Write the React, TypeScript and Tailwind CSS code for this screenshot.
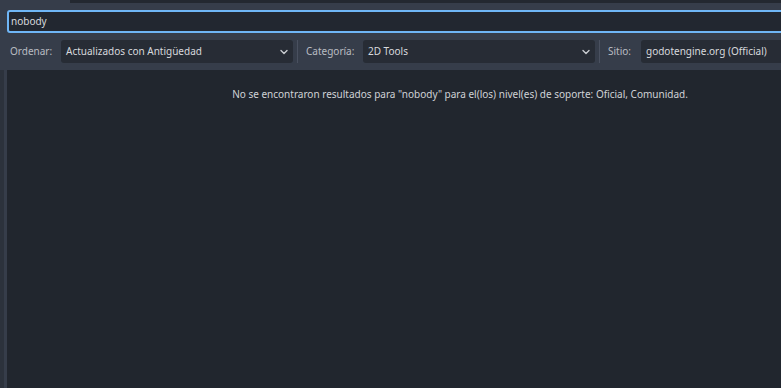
import React from "react";

const Chevron = () => (
  <svg width="10" height="10" viewBox="0 0 10 10" className="shrink-0">
    <path d="M2 3.5 L5 6.5 L8 3.5" fill="none" stroke="#c9ccd1" strokeWidth="1.4" strokeLinecap="round" strokeLinejoin="round" />
  </svg>
);

const Select = ({ text }: { text: string }) => (
  <div className="flex h-[23px] w-[232px] shrink-0 items-center justify-between rounded-[3px] bg-[#272c35] pl-[5px] pr-[4px] text-[#d7d9dd]">
    <span>{text}</span>
    <Chevron />
  </div>
);

const Sep = () => <div className="ml-[4px] mr-[8px] h-[23px] w-px shrink-0 bg-[#4a5160]" />;

export default function App() {
  return (
    <div
      className="h-[388px] w-[781px] overflow-hidden bg-[#363d4a] text-[10px]"
      style={{ fontFamily: '"Noto Sans", "Open Sans", sans-serif' }}
    >
      <div className="w-[913px]">
        <div className="flex h-[3px]">
          <div className="w-[70px]" />
          <div className="flex-1 bg-[#232830]" />
        </div>
        <div className="pl-[7px] pt-[7px]">
          <div className="flex h-[23px] items-center rounded-[3px] border-2 border-[#6fb6f6] bg-[#222730] pl-[2px] text-[#d7d9dd]">
            nobody
          </div>
        </div>
        <div className="mt-[7px] flex h-[23px] items-center pl-[10px]">
          <span className="w-[51px] shrink-0 text-[#b9bcc2]">Ordenar:</span>
          <Select text="Actualizados con Antigüedad" />
          <Sep />
          <span className="w-[57px] shrink-0 text-[#b9bcc2]">Categoría:</span>
          <Select text="2D Tools" />
          <Sep />
          <span className="w-[33px] shrink-0 text-[#b9bcc2]">Sitio:</span>
          <Select text="godotengine.org (Official)" />
        </div>
        <div className="mt-[7px] flex">
          <div className="w-[4px] bg-[#2c323c]" />
          <div className="w-[3px]" />
          <div className="h-[318px] flex-1 bg-[#21262e] pt-[17px] text-center text-[#d0d2d6]">
            No se encontraron resultados para "nobody" para el(los) nivel(es) de soporte: Oficial, Comunidad.
          </div>
        </div>
      </div>
    </div>
  );
}
